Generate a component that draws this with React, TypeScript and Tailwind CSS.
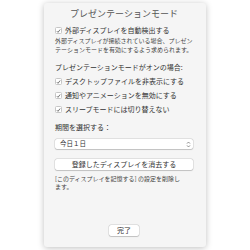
const jp = { fontFamily: '"Noto Sans CJK JP", "Noto Sans", sans-serif' };

const Check = () => (
    <span className="w-[7px] h-[7px] bg-white border border-[#c6c6c6] rounded-[1.5px] flex items-center justify-center shrink-0">
        <svg width="6" height="6" viewBox="0 0 6 6">
            <path d="M1 3.2 L2.4 4.6 L5 1.2" fill="none" stroke="#444" strokeWidth="0.9" />
        </svg>
    </span>
);

const CheckRow = ({ label }: { label: string }) => (
    <div className="flex items-center gap-[3px] h-[9px] text-[7px] leading-[9px] text-[#333]">
        <Check />
        <span>{label}</span>
    </div>
);

export default function App() {
    return (
        <div className="w-[250px] h-[250px] bg-white pl-[44px] pt-[3px]" style={jp}>
            <div className="w-[162px] h-[244px] bg-[#f5f5f5] rounded-[3px] shadow-[0_1px_6px_rgba(0,0,0,0.25)] px-[11px] pr-[13px] pt-[5px] pb-[11px] flex flex-col">
                <div className="text-center text-[9px] leading-[12px] text-[#555]">プレゼンテーションモード</div>

                <div className="mt-[6px]">
                    <CheckRow label="外部ディスプレイを自動検出する" />
                </div>
                <p className="mt-[2px] text-[6px] leading-[8.5px] text-[#444]">
                    外部ディスプレイが接続されている場合、プレゼンテーションモードを有効にするよう求められます。
                </p>

                <div className="mt-[9px] text-[7px] leading-[9px] text-[#333]">プレゼンテーションモードがオンの場合:</div>
                <div className="mt-[5px] flex flex-col gap-[5px]">
                    <CheckRow label="デスクトップファイルを非表示にする" />
                    <CheckRow label="通知やアニメーションを無効にする" />
                    <CheckRow label="スリープモードには切り替えない" />
                </div>

                <div className="mt-[9px] text-[7px] leading-[9px] text-[#333]">期間を選択する：</div>
                <div className="mt-[7px] h-[10px] bg-white rounded-[2px] shadow-[0_0_0_0.5px_rgba(0,0,0,0.15),0_0.5px_1px_rgba(0,0,0,0.15)] flex items-center justify-between pl-[5px] pr-[2px] text-[6.5px] text-[#333]">
                    <span>今日１日</span>
                    <svg width="5" height="7" viewBox="0 0 5 7">
                        <path d="M1 2.6 L2.5 1 L4 2.6 M1 4.4 L2.5 6 L4 4.4" fill="none" stroke="#666" strokeWidth="0.7" />
                    </svg>
                </div>

                <button className="mt-[10px] h-[11px] bg-white rounded-[2px] shadow-[0_0_0_0.5px_rgba(0,0,0,0.15),0_0.5px_1px_rgba(0,0,0,0.15)] flex items-center justify-center text-[7px] text-[#333]">
                    登録したディスプレイを消去する
                </button>
                <p className="mt-[5px] text-[6px] leading-[7.7px] text-[#444]">
                    [このディスプレイを記憶する] の設定を削除し<br />ます。
                </p>

                <div className="mt-auto flex justify-center">
                    <button className="w-[30px] h-[11px] bg-white rounded-[2px] shadow-[0_0_0_0.5px_rgba(0,0,0,0.15),0_0.5px_1px_rgba(0,0,0,0.15)] flex items-center justify-center text-[7px] text-[#333]">
                        完了
                    </button>
                </div>
            </div>
        </div>
    );
}
